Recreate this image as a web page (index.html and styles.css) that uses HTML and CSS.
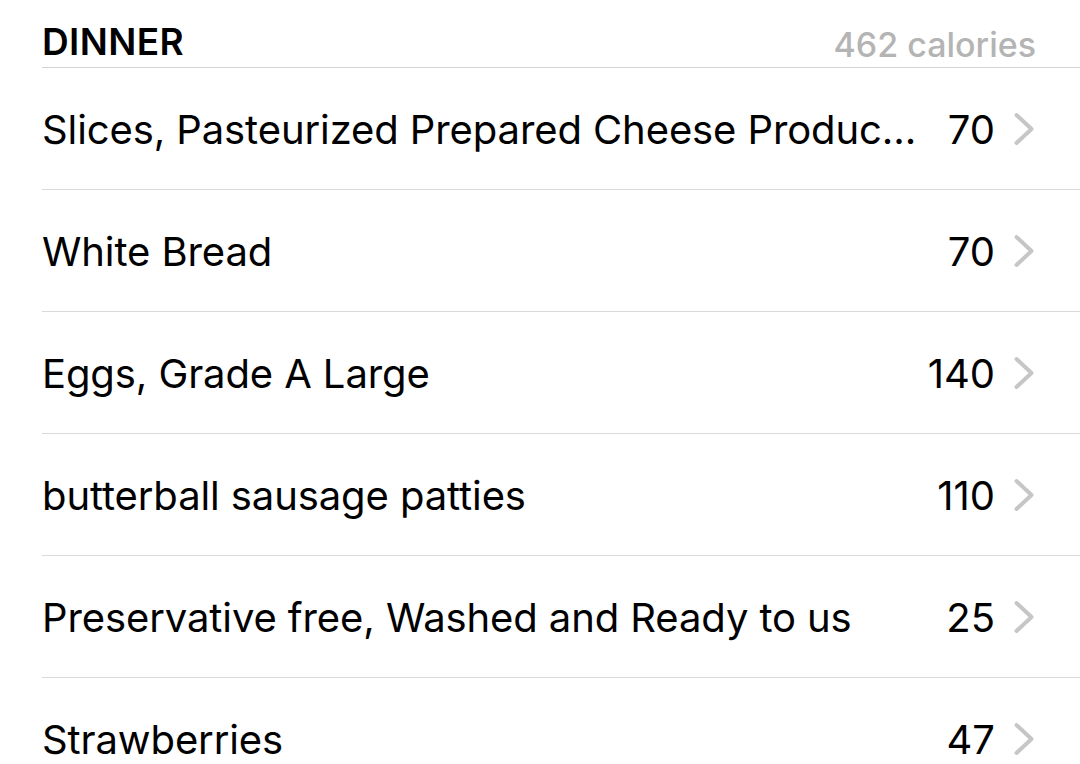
FILE: index.html
```html
<!DOCTYPE html>
<html>
<head>
<meta charset="utf-8">
<link rel="stylesheet" href="styles.css">
</head>
<body>
<div class="section">
  <div class="header">
    <span class="title">DINNER</span>
    <span class="total">462 calories</span>
  </div>
  <div class="row"><span class="name">Slices, Pasteurized Prepared Cheese Produc...</span><span class="cal">70</span><svg class="chev" viewBox="0 0 20 34"><path d="M2.5 3 L17.5 17 L2.5 31"/></svg></div>
  <div class="row"><span class="name">White Bread</span><span class="cal">70</span><svg class="chev" viewBox="0 0 20 34"><path d="M2.5 3 L17.5 17 L2.5 31"/></svg></div>
  <div class="row"><span class="name">Eggs, Grade A Large</span><span class="cal">140</span><svg class="chev" viewBox="0 0 20 34"><path d="M2.5 3 L17.5 17 L2.5 31"/></svg></div>
  <div class="row"><span class="name">butterball sausage patties</span><span class="cal">110</span><svg class="chev" viewBox="0 0 20 34"><path d="M2.5 3 L17.5 17 L2.5 31"/></svg></div>
  <div class="row"><span class="name">Preservative free, Washed and Ready to us</span><span class="cal">25</span><svg class="chev" viewBox="0 0 20 34"><path d="M2.5 3 L17.5 17 L2.5 31"/></svg></div>
  <div class="row"><span class="name">Strawberries</span><span class="cal">47</span><svg class="chev" viewBox="0 0 20 34"><path d="M2.5 3 L17.5 17 L2.5 31"/></svg></div>
</div>
</body>
</html>
```

FILE: styles.css
```css
html, body {
  margin: 0;
  padding: 0;
  background: #ffffff;
  overflow: hidden;
}
body {
  font-family: Inter, "Liberation Sans", sans-serif;
  color: #000;
  width: 1080px;
  height: 764px;
}
.section {
  padding-left: 42px;
}
.header {
  height: 68px;
  display: flex;
  align-items: flex-start;
  justify-content: space-between;
  padding-right: 44px;
  border-bottom: 1px solid #d4d4d6;
  box-sizing: border-box;
}
.title {
  font-size: 37px;
  font-weight: 600;
  letter-spacing: 0.4px;
  margin-top: 19px;
}
.total {
  font-size: 34px;
  font-weight: 500;
  color: #b4b4b4;
  margin-top: 24px;
}
.row {
  height: 122px;
  box-sizing: border-box;
  border-bottom: 1px solid #d9d9db;
  display: flex;
  align-items: center;
  padding-right: 46px;
  padding-top: 1px;
  font-size: 40px;
}
.name {
  flex: 1;
  white-space: nowrap;
  overflow: hidden;
  letter-spacing: -0.1px;
}
.cal {
  margin-left: 20px;
}
.chev {
  width: 20px;
  height: 34px;
  margin-left: 19px;
  fill: none;
  stroke: #c6c6c8;
  stroke-width: 4;
  stroke-linecap: round;
  stroke-linejoin: round;
}
```
